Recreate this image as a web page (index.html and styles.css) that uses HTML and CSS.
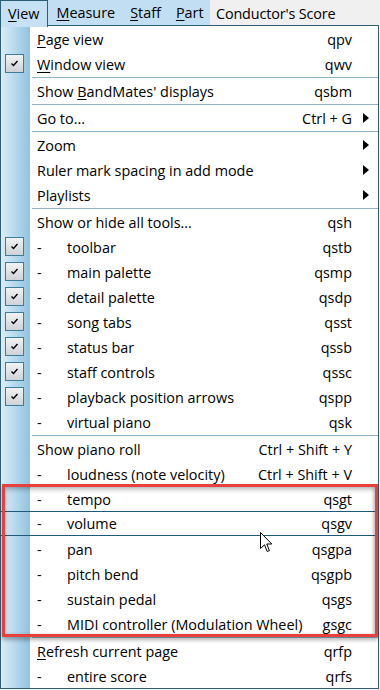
FILE: index.html
```html
<!DOCTYPE html>
<html>
<head>
<meta charset="utf-8">
<link rel="stylesheet" href="styles.css">
</head>
<body>
<div class="menubar">
  <div class="mb-items">
    <span class="mb-item active"><u>V</u>iew</span>
    <span class="mb-item"><u>M</u>easure</span>
    <span class="mb-item"><u>S</u>taff</span>
    <span class="mb-item"><u>P</u>art</span>
  </div>
  <div class="mb-title">Conductor's Score</div>
</div>
<div class="menu">
  <div class="row"><span class="chk"></span><span class="label"><u>P</u>age view</span><span class="key">qpv</span><span class="sub"></span></div>
  <div class="row"><span class="chk"><i class="box"></i></span><span class="label"><u>W</u>indow view</span><span class="key">qwv</span><span class="sub"></span></div>
  <div class="sep"></div>
  <div class="row"><span class="chk"></span><span class="label">Show <u>B</u>andMates' displays</span><span class="key">qsbm</span><span class="sub"></span></div>
  <div class="sep"></div>
  <div class="row"><span class="chk"></span><span class="label">Go to...</span><span class="key">Ctrl + G</span><span class="sub"><i class="arrow"></i></span></div>
  <div class="sep"></div>
  <div class="row"><span class="chk"></span><span class="label">Zoom</span><span class="key"></span><span class="sub"><i class="arrow"></i></span></div>
  <div class="row"><span class="chk"></span><span class="label">Ruler mark spacing in add mode</span><span class="key"></span><span class="sub"><i class="arrow"></i></span></div>
  <div class="row"><span class="chk"></span><span class="label">Playlists</span><span class="key"></span><span class="sub"><i class="arrow"></i></span></div>
  <div class="sep"></div>
  <div class="row"><span class="chk"></span><span class="label">Show or hide all tools...</span><span class="key">qsh</span><span class="sub"></span></div>
  <div class="row"><span class="chk"><i class="box"></i></span><span class="label"><span class="dash">-</span>toolbar</span><span class="key">qstb</span><span class="sub"></span></div>
  <div class="row"><span class="chk"><i class="box"></i></span><span class="label"><span class="dash">-</span>main palette</span><span class="key">qsmp</span><span class="sub"></span></div>
  <div class="row"><span class="chk"><i class="box"></i></span><span class="label"><span class="dash">-</span>detail palette</span><span class="key">qsdp</span><span class="sub"></span></div>
  <div class="row"><span class="chk"><i class="box"></i></span><span class="label"><span class="dash">-</span>song tabs</span><span class="key">qsst</span><span class="sub"></span></div>
  <div class="row"><span class="chk"><i class="box"></i></span><span class="label"><span class="dash">-</span>status bar</span><span class="key">qssb</span><span class="sub"></span></div>
  <div class="row"><span class="chk"><i class="box"></i></span><span class="label"><span class="dash">-</span>staff controls</span><span class="key">qssc</span><span class="sub"></span></div>
  <div class="row"><span class="chk"><i class="box"></i></span><span class="label"><span class="dash">-</span>playback position arrows</span><span class="key">qspp</span><span class="sub"></span></div>
  <div class="row"><span class="chk"></span><span class="label"><span class="dash">-</span>virtual piano</span><span class="key">qsk</span><span class="sub"></span></div>
  <div class="sep"></div>
  <div class="row"><span class="chk"></span><span class="label">Show piano roll</span><span class="key">Ctrl + Shift + Y</span><span class="sub"></span></div>
  <div class="row"><span class="chk"></span><span class="label"><span class="dash">-</span>loudness (note velocity)</span><span class="key">Ctrl + Shift + V</span><span class="sub"></span></div>
  <div class="row"><span class="chk"></span><span class="label"><span class="dash">-</span>tempo</span><span class="key">qsgt</span><span class="sub"></span></div>
  <div class="row hot"><span class="chk"></span><span class="label"><span class="dash">-</span>volume</span><span class="key">qsgv</span><span class="sub"></span></div>
  <div class="row"><span class="chk"></span><span class="label"><span class="dash">-</span>pan</span><span class="key">qsgpa</span><span class="sub"></span></div>
  <div class="row"><span class="chk"></span><span class="label"><span class="dash">-</span>pitch bend</span><span class="key">qsgpb</span><span class="sub"></span></div>
  <div class="row"><span class="chk"></span><span class="label"><span class="dash">-</span>sustain pedal</span><span class="key">qsgs</span><span class="sub"></span></div>
  <div class="row"><span class="chk"></span><span class="label"><span class="dash">-</span>MIDI controller (Modulation Wheel)</span><span class="key">gsgc</span><span class="sub"></span></div>
  <div class="sep"></div>
  <div class="row"><span class="chk"></span><span class="label"><u>R</u>efresh current page</span><span class="key">qrfp</span><span class="sub"></span></div>
  <div class="row"><span class="chk"></span><span class="label"><span class="dash">-</span>entire score</span><span class="key">qrfs</span><span class="sub"></span></div>
</div>
<div class="annot"></div>
<svg class="cursor" width="13" height="21" viewBox="0 0 13 21"><path d="M0.5 0.5 L0.5 16.5 L4.5 12.8 L7.2 19.5 L9.4 18.6 L6.8 12 L11.8 12 Z" fill="#fff" stroke="#000" stroke-width="1" stroke-linejoin="miter"/></svg>
</body>
</html>
```

FILE: styles.css
```css
html, body {
  margin: 0;
  padding: 0;
  background: #ffffff;
}
body {
  position: relative;
  width: 380px;
  height: 690px;
  overflow: hidden;
  font-family: "Open Sans", "Noto Sans", sans-serif;
  font-size: 14.4px;
  color: #000;
}
u {
  text-decoration: underline;
  text-underline-offset: 2px;
}
.menubar {
  display: flex;
  height: 25px;
}
.mb-items {
  display: flex;
  width: 210px;
  background: #c2def2;
}
.mb-item {
  display: flex;
  align-items: center;
  padding: 1px 6px 0 7px;
  border: 1px solid transparent;
  border-bottom: none;
  line-height: 1;
}
.mb-item.active {
  padding: 1px 8px 0 7px;
  background: #c6e1f4;
  border-color: #2e5d78;
  position: relative;
  z-index: 2;
  height: 25px;
  margin-bottom: -1px;
}
.mb-title {
  flex: 1;
  background: #f0f0f0;
  display: flex;
  align-items: center;
  padding: 1px 0 0 6px;
  letter-spacing: -0.15px;
}
.menu {
  width: 379px;
  box-sizing: border-box;
  border: 1px solid #2e5d78;
  background: linear-gradient(to right, #dcedf7 0px, #8fc3e0 29px, #ffffff 29px);
}
.row {
  display: grid;
  grid-template-columns: 30px 1fr auto 26px;
  align-items: center;
  height: 25px;
  padding-top: 1px;
  box-sizing: border-box;
  white-space: nowrap;
}
.row.hot {
  padding-top: 0;
  border-top: 1px solid #1f5878;
  border-bottom: 1px solid #1f5878;
}
.chk {
  display: flex;
  align-items: center;
  height: 100%;
}
.box {
  display: block;
  width: 19px;
  height: 19px;
  margin-left: 4px;
  margin-top: -1px;
  box-sizing: border-box;
  border: 1px solid #3e7c9c;
  background:
    url("data:image/svg+xml,%3Csvg xmlns='http://www.w3.org/2000/svg' width='17' height='17'%3E%3Cpath d='M5.5 8.5 L7.5 10.5 L11.5 6' fill='none' stroke='%23000' stroke-width='1.4'/%3E%3C/svg%3E") center no-repeat,
    linear-gradient(to bottom, #f2f2f2, #cfd3d6);
}
.label {
  padding-left: 6px;
}
.dash {
  display: inline-block;
  width: 30px;
}
.key {
  text-align: right;
}
.sub {
  display: flex;
  align-items: center;
  height: 100%;
}
.arrow {
  display: block;
  margin-left: 11px;
  margin-top: -1px;
  width: 0;
  height: 0;
  border-top: 5px solid transparent;
  border-bottom: 5px solid transparent;
  border-left: 6px solid #000;
}
.sep {
  height: 1px;
  margin: 1px 0 0 31px;
  background: #8fb4c8;
}
.annot {
  position: absolute;
  left: 2px;
  top: 484px;
  width: 376px;
  height: 153px;
  box-sizing: border-box;
  border: 3px solid #e8413d;
  box-shadow: 0 3px 4px rgba(0,0,0,0.3), inset 0 3px 4px rgba(0,0,0,0.22), inset -2px 0 3px rgba(0,0,0,0.15);
  pointer-events: none;
}
.cursor {
  position: absolute;
  left: 260px;
  top: 532px;
}
```
